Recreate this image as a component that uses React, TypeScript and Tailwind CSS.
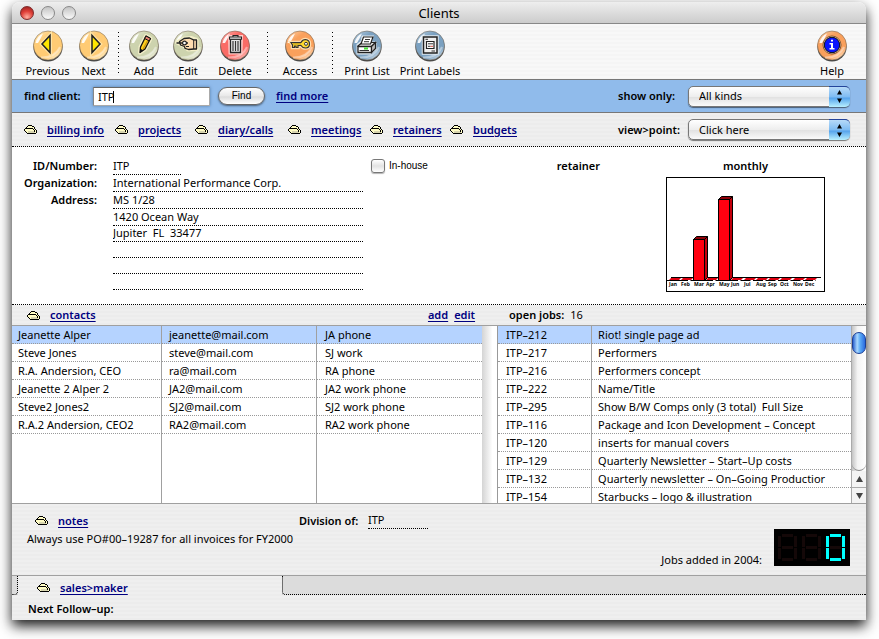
import { useState } from "react"
import type { ReactNode } from "react"

const contacts = [
  ["Jeanette Alper", "jeanette@mail.com", "JA phone"],
  ["Steve Jones", "steve@mail.com", "SJ work"],
  ["R.A. Andersion, CEO", "ra@mail.com", "RA phone"],
  ["Jeanette 2 Alper 2", "JA2@mail.com", "JA2 work phone"],
  ["Steve2 Jones2", "SJ2@mail.com", "SJ2 work phone"],
  ["R.A.2 Andersion, CEO2", "RA2@mail.com", "RA2 work phone"],
]

const jobs = [
  ["ITP–212", "Riot! single page ad"],
  ["ITP–217", "Performers"],
  ["ITP–216", "Performers concept"],
  ["ITP–222", "Name/Title"],
  ["ITP–295", "Show B/W Comps only (3 total)  Full Size"],
  ["ITP–116", "Package and Icon Development – Concept"],
  ["ITP–120", "inserts for manual covers"],
  ["ITP–129", "Quarterly Newsletter – Start–Up costs"],
  ["ITP–132", "Quarterly newsletter – On–Going Productior"],
  ["ITP–154", "Starbucks – logo & illustration"],
]

const sections = [
  { label: "billing info", width: "w-[91px]" },
  { label: "projects", width: "w-[80px]" },
  { label: "diary/calls", width: "w-[93px]" },
  { label: "meetings", width: "w-[82px]" },
  { label: "retainers", width: "w-[80px]" },
  { label: "budgets", width: "w-[80px]" },
]

const months = [
  { name: "Jan", x: 3, value: 0 },
  { name: "Feb", x: 15, value: 0 },
  { name: "Mar", x: 28, value: 41 },
  { name: "Apr", x: 40, value: 0 },
  { name: "May", x: 53, value: 81 },
  { name: "Jun", x: 65, value: 0 },
  { name: "Jul", x: 78, value: 0 },
  { name: "Aug", x: 90, value: 0 },
  { name: "Sep", x: 102, value: 0 },
  { name: "Oct", x: 114, value: 0 },
  { name: "Nov", x: 127, value: 0 },
  { name: "Dec", x: 139, value: 0 },
]

const stripes = "bg-[repeating-linear-gradient(#efefef_0px,#efefef_2px,#ececec_2px,#ececec_4px)]"
const linkStyle = "font-semibold text-[#000080] underline underline-offset-2"
const cell = "h-[18px] border-b border-b-[#999] leading-[17px] [border-bottom-style:dotted]"

function Orb({ id, light, color, children }: { id: string; light: string; color: string; children: ReactNode }) {
  return (
    <svg width="32" height="32" viewBox="0 0 32 32" aria-hidden="true">
      <defs>
        <linearGradient id={id} x1="0" y1="0" x2="0.7" y2="1">
          <stop offset="0" stopColor={light} />
          <stop offset="0.35" stopColor={color} />
          <stop offset="0.8" stopColor={color} />
          <stop offset="1" stopColor={light} />
        </linearGradient>
      </defs>
      <circle cx="16" cy="17" r="14.6" fill="#4a4a48" />
      <circle cx="16" cy="15.5" r="14.5" fill={`url(#${id})`} stroke="#6b5a48" strokeWidth="0.5" />
      <path d="M3.500 13 Q5 6 11 3.500 Q9 8 6 13 Z" fill="#fff" opacity="0.9" />
      <path d="M9 27.500 Q23 28 28 17" fill="none" stroke="#fff" strokeWidth="2" opacity="0.4" />
      {children}
    </svg>
  )
}

const icons = {
  previous: (
    <Orb id="orb-prev" light="#ffedc4" color="#ffcb74">
      <path d="M10 14 L18 5.500 V22.500 Z" fill="#ffe600" stroke="#ffe3a4" strokeWidth="4" />
      <path d="M10 14 L18 5.500 V22.500 Z" fill="#ffe600" stroke="#222" strokeWidth="1.500" />
    </Orb>
  ),
  next: (
    <Orb id="orb-next" light="#ffedc4" color="#ffcb74">
      <path d="M22 14 L14 5.500 V22.500 Z" fill="#ffe600" stroke="#ffe3a4" strokeWidth="4" />
      <path d="M22 14 L14 5.500 V22.500 Z" fill="#ffe600" stroke="#222" strokeWidth="1.500" />
    </Orb>
  ),
  add: (
    <Orb id="orb-add" light="#eef0dc" color="#cdd3ae">
      <path d="M12 22.500 L12.500 17 L18 6 L22.500 8.500 L17 19 Z" fill="none" stroke="#f2eec8" strokeWidth="4" strokeLinejoin="round" />
      <path d="M12 22.500 L12.500 17 L18 6 L22.500 8.500 L17 19 Z" fill="#ffd21e" stroke="#111" strokeWidth="1.300" strokeLinejoin="round" />
      <path d="M16.700 8.500 L18 6 L22.500 8.500 L21.200 11 Z" fill="#e88070" stroke="#111" strokeWidth="1" />
      <path d="M19.500 11 L15 19" stroke="#c99512" strokeWidth="1.200" />
      <path d="M11.800 23 L12.200 18.500 L15.500 20.500 Z" fill="#111" />
    </Orb>
  ),
  edit: (
    <Orb id="orb-edit" light="#eef0dc" color="#cdd3ae">
      <path d="M5 12.500 L12 8.500 L19 8 L24.500 10 V19 L16 19.500 L12 16 Z" fill="none" stroke="#f2eec8" strokeWidth="4" strokeLinejoin="round" />
      <path d="M7.500 11.500 L12 8.500 L17.500 8 L21.500 9.800 L24.500 10 V19 H22 L16.500 19.500 L13 18.300 L12.500 16.500 L8.500 15 Z" fill="#ffddb0" stroke="#222" strokeWidth="1.300" strokeLinejoin="round" />
      <path d="M4.500 13 H16" stroke="#222" strokeWidth="1.600" />
      <circle cx="12.500" cy="13" r="1.900" fill="#fff" stroke="#222" strokeWidth="1.200" />
      <path d="M14 16.500 H17 M21.700 10 V19" stroke="#222" />
    </Orb>
  ),
  remove: (
    <Orb id="orb-del" light="#ffb9b4" color="#fa6c66">
      <path d="M11 7 H22 L21.500 22.500 H11.500 Z" fill="none" stroke="#ffcac6" strokeWidth="4" />
      <path d="M11.500 9 V22.500 H21.500 V9 Z" fill="#e8e8e8" stroke="#222" strokeWidth="1.300" />
      <path d="M10.500 7 H22.500 V9.200 H10.500 Z M14 7 V5.500 H19 V7" fill="#e8e8e8" stroke="#222" strokeWidth="1.100" />
      <path d="M14 11 V21 M16.500 11 V21 M19 11 V21" stroke="#333" strokeWidth="1.200" />
    </Orb>
  ),
  access: (
    <Orb id="orb-key" light="#ffd9b4" color="#f9a05c">
      <path d="M7 12.500 H17 Q18.500 9.500 21.500 9.500 Q25.500 10 25.500 14 Q25.500 18 21.500 18 Q18.500 18 17 15.500 H14 V17.500 H12 V16 H10.500 V17.500 H8.500 V15 Z" fill="#ffd92e" stroke="#ffdfae" strokeWidth="3.500" />
      <path d="M7 12.500 H17 Q18.500 9.500 21.500 9.500 Q25.500 10 25.500 14 Q25.500 18 21.500 18 Q18.500 18 17 15.500 H14 V17.500 H12 V16 H10.500 V17.500 H8.500 V15 Z" fill="#ffd92e" stroke="#333" strokeWidth="1.200" />
      <circle cx="22" cy="13.800" r="1.500" fill="#fff" stroke="#333" />
      <path d="M9 13.900 H17" stroke="#967612" strokeWidth="0.800" />
    </Orb>
  ),
  printList: (
    <Orb id="orb-list" light="#c0d4e4" color="#7ba1c1">
      <path d="M12 7 H21 L19 13 L24 13 V19 L19 23 H7 V15 L11 12 Z" fill="#fff" stroke="#dfe8ee" strokeWidth="3" />
      <path d="M7 16 L11 12.500 H24.500 L20.500 16.500 H7 Z" fill="#e6e6e6" stroke="#222" strokeWidth="1.200" />
      <path d="M7 16.500 H20.500 V22.500 H7 Z" fill="#fff" stroke="#222" strokeWidth="1.300" />
      <path d="M20.500 16.500 L24.500 12.500 V18.500 L20.500 22.500 Z" fill="#bbb" stroke="#222" strokeWidth="1.200" />
      <path d="M12.500 7 H22 L19.500 14 H10 Z" fill="#fff" stroke="#222" strokeWidth="1.200" />
      <path d="M14 9.500 H19 M13 11.700 H18 M8.500 20.500 H18" stroke="#333" />
      <path d="M13 18.500 H17" stroke="#45df35" strokeWidth="2" />
    </Orb>
  ),
  printLabels: (
    <Orb id="orb-labels" light="#c0d4e4" color="#7ba1c1">
      <path d="M9.500 7 H23 V23 H9.500 Z" fill="#efefef" stroke="#dfe8ee" strokeWidth="3.500" />
      <path d="M9.500 7 H23 V23 H9.500 Z" fill="#efefef" stroke="#222" strokeWidth="1.500" />
      <path d="M12.500 11.500 H20 V18.500 H12.500 Z" fill="#fff" stroke="#222" strokeWidth="1.200" />
      <path d="M11.500 9.300 H14 M14 13.800 H19 M14 16.300 H16.500 M17.500 21 H21" stroke="#333" />
      <path d="M16.500 16.300 H19" stroke="#d34a3c" />
    </Orb>
  ),
  help: (
    <Orb id="orb-help" light="#ffd9b4" color="#f9a05c">
      <circle cx="16" cy="15" r="9" fill="#ffe0b8" stroke="#4a2d18" strokeWidth="0.700" />
      <circle cx="16" cy="15" r="7.700" fill="#0a14ff" stroke="#111" />
      <path d="M13.500 13 H17 V18 H18.500 V19.500 H13.500 V18 H15 V14.500 H13.500 Z M15 9.700 H17 V11.600 H15 Z" fill="#fff" />
    </Orb>
  ),
}

function ToolButton({ label, icon, width }: { label: string; icon: ReactNode; width: string }) {
  return (
    <button type="button" className={`${width} flex shrink-0 flex-col items-center whitespace-nowrap`}>
      {icon}
      <span className="mt-px leading-[15px]">{label}</span>
    </button>
  )
}

function Divider({ className }: { className: string }) {
  return (
    <div
      className={`${className} h-[43px] w-px shrink-0 bg-[repeating-linear-gradient(#000_0px,#000_1px,transparent_1px,transparent_4px)]`}
    />
  )
}

function Folder() {
  return (
    <svg width="13" height="9" viewBox="0 0 13 9" className="shrink-0" shapeRendering="crispEdges" aria-hidden="true">
      <path d="M4 1 H9 V2 H11 V5 H12 V8 H3 V7 H2 V6 H1 V4 H3 V2 H4 Z" fill="#fffcc4" />
      <path d="M4 6 H10 V7 H11 V8 H4 Z" fill="#d8d5b0" />
      <path
        d="M4 0 H8 V1 H4 Z M8 1 H10 V2 H8 Z M10 2 H11 V4 H10 Z M3 1 H4 V2 H3 Z M2 2 H3 V3 H2 Z M1 3 H9 V4 H1 Z M0 4 H1 V6 H0 Z M9 4 H10 V5 H9 Z M10 5 H11 V7 H10 Z M11 4 H12 V5 H11 Z M12 5 H13 V8 H12 Z M1 6 H2 V7 H1 Z M2 7 H3 V8 H2 Z M3 8 H12 V9 H3 Z"
        fill="#000"
      />
    </svg>
  )
}

function FolderLink({ label }: { label: string }) {
  return (
    <span className="flex items-center gap-2.5 whitespace-nowrap">
      <Folder />
      <a href="#" className={linkStyle}>{label}</a>
    </span>
  )
}

function Popup({ id, label, value }: { id: string; label: string; value: string }) {
  return (
    <div className="flex items-center whitespace-nowrap">
      <label htmlFor={id} className="w-[70px] font-semibold">{label}</label>
      <div className="relative">
        <select
          id={id}
          className="block h-[21px] w-[162px] appearance-none rounded-[5px] border border-[#777] bg-[linear-gradient(#fff,#eee_50%,#e2e2e2_55%,#fafafa)] pl-2.5 text-[11px] shadow-[0_1px_1px_rgba(0,0,0,0.5)]"
        >
          <option>{value}</option>
        </select>
        <span className="pointer-events-none absolute top-0 right-0 flex h-[21px] w-[21px] items-center justify-center rounded-r-[5px] border-t border-[#23449b] bg-[linear-gradient(#b7daf8,#7dbbf2_50%,#55a3ec_55%,#b8f0ff)]">
          <svg width="7" height="13" viewBox="0 0 7 13" aria-hidden="true">
            <path d="M3.500 0 L6 4.500 H1 Z M3.500 13 L6 8.500 H1 Z" />
          </svg>
        </span>
      </div>
    </div>
  )
}

function Field({ id, label, value, width, height }: { id: string; label: string; value: string; width: string; height: string }) {
  return (
    <input
      id={id}
      aria-label={label}
      defaultValue={value}
      className={`${width} ${height} border-b border-dotted border-black bg-transparent pb-px outline-none`}
    />
  )
}

function MonthlyChart() {
  return (
    <svg width="159" height="115" viewBox="0 0 159 115" role="img" aria-label="monthly retainer chart">
      <rect x="0.5" y="0.5" width="158" height="114" fill="#fff" stroke="#000" />
      {months.map((m) => (
        <path key={m.name} d={`M${m.x} 103 l2.500 -2.500 h10 l-2.500 2.500 z`} fill="#e00010" />
      ))}
      <path d="M0 103.500 H12 M5 100.500 H155" stroke="#000" />
      <path d="M12 103.500 H150" stroke="#000" strokeDasharray="10 2.500" />
      {months.filter((m) => m.value > 0).map((m) => {
        const top = 103.5 - m.value
        const x = m.x - 0.5
        return (
          <g key={m.name} stroke="#000">
            <path d={`M${x} ${top} l3 -3 h11 l-3 3 z`} fill="#900008" />
            <path d={`M${x + 11} ${top} l3 -3 V100.500 l-3 3 z`} fill="#c4000c" />
            <rect x={x} y={top} width="11" height={m.value} fill="#ff0010" />
          </g>
        )
      })}
      {months.map((m) => (
        <text key={m.name} x={m.x} y="108.500" className="text-[5px] font-bold">{m.name}</text>
      ))}
    </svg>
  )
}

// One seven-segment digit, unlit segments stay faintly visible
function Digit({ x, lit }: { x: number; lit: boolean }) {
  const color = lit ? "#00ffff" : "#140808"
  return (
    <g shapeRendering="crispEdges">
      <path
        d={`M${x + 4} 5 h11 v3 h-11 z M${x + 4} 29 h11 v3 h-11 z M${x} 7 h3 v11 h-3 z M${x} 19 h3 v11 h-3 z M${x + 16} 7 h3 v11 h-3 z M${x + 16} 19 h3 v11 h-3 z`}
        fill={color}
      />
      <path d={`M${x + 4} 17 h11 v3 h-11 z`} fill="#140808" />
    </g>
  )
}

export default function App() {
  const [search, setSearch] = useState("ITP")

  return (
    <div className="bg-white pt-0.5 pr-[13px] pb-5 pl-3 font-['Lucida_Grande','Noto_Sans',sans-serif] text-[11px] leading-4 text-black">
      <div className="overflow-hidden rounded-t-[8px] shadow-[0_6px_13px_rgba(0,0,0,0.9)]">
        <header className="relative flex h-[22px] items-center justify-center border-b border-[#888] bg-[linear-gradient(#eee,#ccc)]">
          <div className="absolute left-2 flex gap-[7px]">
            <button type="button" aria-label="Close" className="size-3.5 rounded-full border border-[#7d2a2a] bg-[radial-gradient(circle_at_50%_85%,#ffb0a0,#e04038_50%,#8f1c1c)]" />
            <button type="button" aria-label="Minimize" className="size-3.5 rounded-full border border-[#888] bg-[linear-gradient(#c4c4c4,#fafafa)]" />
            <button type="button" aria-label="Zoom" className="size-3.5 rounded-full border border-[#888] bg-[linear-gradient(#c4c4c4,#fafafa)]" />
          </div>
          <h1 className="text-[13px]">Clients</h1>
        </header>

        <nav className="flex items-start border-b border-[#777] bg-[repeating-linear-gradient(#f8f8f8_0px,#f8f8f8_2px,#f5f5f5_2px,#f5f5f5_4px)] pt-1.5 pb-px pl-3">
          <ToolButton label="Previous" icon={icons.previous} width="w-[47px]" />
          <ToolButton label="Next" icon={icons.next} width="w-[45px]" />
          <Divider className="mt-0.5 mr-[3px] ml-0.5" />
          <ToolButton label="Add" icon={icons.add} width="w-[44px]" />
          <ToolButton label="Edit" icon={icons.edit} width="w-[44px]" />
          <ToolButton label="Delete" icon={icons.remove} width="w-[50px]" />
          <Divider className="mx-[7px] mt-0.5" />
          <ToolButton label="Access" icon={icons.access} width="w-[50px]" />
          <Divider className="mt-0.5 mr-[3px] ml-[7px]" />
          <ToolButton label="Print List" icon={icons.printList} width="w-[62px]" />
          <ToolButton label="Print Labels" icon={icons.printLabels} width="w-[64px]" />
          <div className="flex-1" />
          <ToolButton label="Help" icon={icons.help} width="w-[68px]" />
        </nav>

        <div className="flex h-[33px] items-center border-b border-[#777] bg-[#90bbeb] pr-4 pl-3">
          <label htmlFor="find" className="w-[69px] font-semibold whitespace-nowrap">find client:</label>
          <div className="relative">
            <input
              id="find"
              value={search}
              onChange={(e) => setSearch(e.target.value)}
              className="block h-[19px] w-[117px] border border-t-[#666] border-r-[#aaa] border-b-[#aaa] border-l-[#888] bg-white px-1 shadow-[0_0_3px_#557fae] outline-none"
            />
            <span className="absolute top-1 left-5 h-3 w-px bg-black" />
          </div>
          <button
            type="button"
            className="ml-2 h-[18px] w-[47px] rounded-full border border-[#666] bg-[linear-gradient(#fff,#e8e8e8_50%,#dcdcdc_55%,#fff)] font-['Liberation_Sans',sans-serif] text-[10px] leading-4 shadow-[0_1px_2px_rgba(0,0,0,0.5)]"
          >
            Find
          </button>
          <a href="#" className={`ml-[11px] whitespace-nowrap ${linkStyle}`}>find more</a>
          <div className="flex-1" />
          <Popup id="show-only" label="show only:" value="All kinds" />
        </div>

        <div className={`${stripes} flex h-[34px] items-center border-b border-dotted border-black pr-4 pl-3`}>
          {sections.map((s) => (
            <div key={s.label} className={`${s.width} shrink-0`}>
              <FolderLink label={s.label} />
            </div>
          ))}
          <div className="flex-1" />
          <Popup id="view-point" label="view>point:" value="Click here" />
        </div>

        <main className="flex items-start border-b border-dotted border-black bg-white pt-[11px] pr-[41px] pb-3">
          <div className="flex w-[101px] shrink-0 flex-col pr-4 text-right font-semibold">
            <label htmlFor="client-id" className="h-[17px]">ID/Number:</label>
            <label htmlFor="organization" className="h-[17px]">Organization:</label>
            <label htmlFor="address-1" className="h-[17px]">Address:</label>
          </div>
          <div className="flex w-[250px] shrink-0 flex-col">
            <Field id="client-id" label="ID/Number" value="ITP" width="w-[68px]" height="h-[17px]" />
            <Field id="organization" label="Organization" value="International Performance Corp." width="w-full" height="h-[17px]" />
            <Field id="address-1" label="Address" value="MS 1/28" width="w-full" height="h-[17px]" />
            <Field id="address-2" label="Address line 2" value="1420 Ocean Way" width="w-full" height="h-[17px]" />
            <Field id="address-3" label="Address line 3" value="Jupiter  FL  33477" width="w-full" height="h-4" />
            <Field id="address-4" label="Address line 4" value="" width="w-full" height="h-4" />
            <Field id="address-5" label="Address line 5" value="" width="w-full" height="h-4" />
            <Field id="address-6" label="Address line 6" value="" width="w-full" height="h-4" />
          </div>
          <label className="ml-2 flex items-center gap-1 font-['Liberation_Sans',sans-serif] text-[10px] whitespace-nowrap">
            <input
              type="checkbox"
              className="size-3.5 appearance-none rounded-[3px] border border-[#777] bg-[linear-gradient(#fff,#e2e2e2_50%,#fff)] shadow-[0_1px_1px_rgba(0,0,0,0.3)]"
            />
            In-house
          </label>
          <div className="flex-1" />
          <h2 className="mr-[66px] font-semibold">retainer</h2>
          <div className="flex flex-col items-center">
            <h2 className="mb-[3px] font-semibold">monthly</h2>
            <MonthlyChart />
          </div>
        </main>

        <div className={`${stripes} flex h-[21px] items-center border-b border-[#a0a0a0]`}>
          <div className="flex w-[56.8%] shrink-0 items-center justify-between pr-[22px] pl-[15px]">
            <FolderLink label="contacts" />
            <span className="flex gap-1.5">
              <a href="#" className={linkStyle}>add</a>
              <a href="#" className={linkStyle}>edit</a>
            </span>
          </div>
          <div className="flex gap-1.5 pl-3">
            <span className="font-semibold">open jobs:</span>
            <span>16</span>
          </div>
        </div>

        <div className="flex h-[178px] border-b border-[#a0a0a0] bg-white">
          <div className="flex w-[56.8%] shrink-0">
            <div className="min-w-0 flex-1">
              <table className="h-full w-full table-fixed border-separate border-spacing-0">
                <colgroup>
                  <col className="w-[150px]" />
                  <col className="w-[155px]" />
                  <col />
                </colgroup>
                <tbody>
                  {contacts.map(([name, email, phone], index) => (
                    <tr key={name} className={index === 0 ? "bg-[#b5d3ff]" : ""}>
                      <td className={`${cell} border-r border-r-[#a0a0a0] pl-1.5`}>{name}</td>
                      <td className={`${cell} border-r border-r-[#a0a0a0] pl-[7px]`}>{email}</td>
                      <td className={`${cell} pl-2`}>{phone}</td>
                    </tr>
                  ))}
                  <tr>
                    <td className="border-r border-r-[#a0a0a0]" />
                    <td className="border-r border-r-[#a0a0a0]" />
                    <td />
                  </tr>
                </tbody>
              </table>
            </div>
            <div className="w-[15px] shrink-0 bg-[linear-gradient(to_right,#d4d4d4,#fff_70%)]" />
          </div>
          <div className="flex min-w-0 flex-1 border-l border-[#999]">
            <div className="h-[177px] min-w-0 flex-1 overflow-hidden">
              <table className="w-full table-fixed border-separate border-spacing-0">
                <colgroup>
                  <col className="w-[94px]" />
                  <col />
                </colgroup>
                <tbody>
                  {jobs.map(([code, title], index) => (
                    <tr key={code} className={index === 0 ? "bg-[#b5d3ff]" : ""}>
                      <td className={`${cell} border-r border-r-[#a0a0a0] pl-2`}>{code}</td>
                      <td className={`${cell} overflow-hidden pl-1.5 whitespace-pre`}>{title}</td>
                    </tr>
                  ))}
                </tbody>
              </table>
            </div>
            <div className="flex w-[15px] shrink-0 flex-col border-l border-[#aaa] bg-[linear-gradient(to_right,#c4c4c4,#f4f4f4_40%,#fff)]">
              <div className="mt-1.5 h-[22px] rounded-full border border-[#1b3f96] bg-[linear-gradient(to_right,#2b62cf,#a9d8ff_35%,#5aa9f5_60%,#2a6ade)]" />
              <div className="flex-1 rounded-b-full border-b border-[#888]" />
              <button type="button" aria-label="Scroll up" className="flex h-4 items-center justify-center bg-[#f4f4f4]">
                <svg width="7" height="6" viewBox="0 0 7 6"><path d="M3.500 0 L7 6 H0 Z" fill="#444" /></svg>
              </button>
              <button type="button" aria-label="Scroll down" className="flex h-4 items-center justify-center border-t border-[#aaa] bg-[#f4f4f4]">
                <svg width="7" height="6" viewBox="0 0 7 6"><path d="M3.500 6 L7 0 H0 Z" fill="#444" /></svg>
              </button>
            </div>
          </div>
        </div>

        <section className={`${stripes} flex justify-between border-b border-[#a0a0a0] pt-2 pr-4 pb-[9px]`}>
          <div className="pl-[15px]">
            <div className="flex items-center pl-2">
              <div className="w-[264px]">
                <FolderLink label="notes" />
              </div>
              <label htmlFor="division" className="w-[69px] font-semibold whitespace-nowrap">Division of:</label>
              <Field id="division" label="Division of" value="ITP" width="w-[60px]" height="h-[17px]" />
            </div>
            <p className="mt-0.5">Always use PO#00–19287 for all invoices for FY2000</p>
          </div>
          <div className="flex items-end gap-3 pt-[17px]">
            <span className="leading-3">Jobs added in 2004:</span>
            <svg width="76" height="37" viewBox="0 0 76 37" role="img" aria-label="0">
              <rect width="76" height="37" fill="#000" />
              <Digit x={4} lit={false} />
              <Digit x={28} lit={false} />
              <Digit x={52} lit />
            </svg>
          </div>
        </section>

        <footer className={stripes}>
          <div className="flex h-[19px]">
            <div className="w-1.5 rounded-br-[3px] border-r border-b border-dotted border-black bg-[#dcdcdc]" />
            <div className="flex w-[264px] items-center pt-1 pl-[19px]">
              <FolderLink label="sales>maker" />
            </div>
            <div className="flex-1 rounded-bl-[3px] border-b border-l border-dotted border-black bg-[#dcdcdc]" />
          </div>
          <p className="px-4 pt-1.5 pb-[3px] font-semibold">Next Follow–up:</p>
        </footer>
      </div>
    </div>
  )
}
